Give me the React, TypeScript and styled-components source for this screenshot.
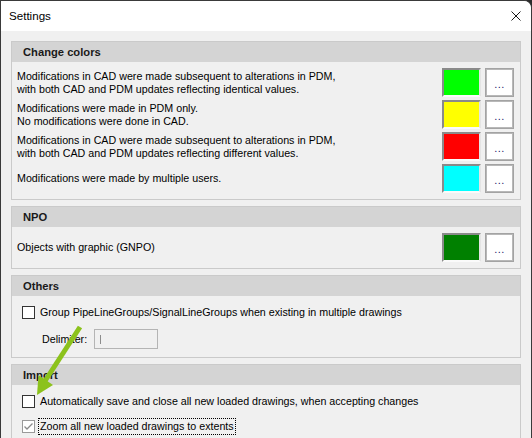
import React from "react";
import styled, { createGlobalStyle } from "styled-components";

const Global = createGlobalStyle`
  html, body { margin: 0; padding: 0; background: #2b2b2b; }
  body {
    width: 532px;
    height: 438px;
    overflow: hidden;
    font-family: "Liberation Sans", Arial, sans-serif;
    font-size: 10.7px;
    color: #000;
  }
  * { box-sizing: border-box; }
`;

const Window = styled.div`
  position: relative;
  width: 532px;
  height: 438px;
  background: #f0f0f0;
  border: 1px solid #3a3a3a;
  border-bottom: none;
  border-top-right-radius: 8px;
  overflow: hidden;
  display: flex;
  flex-direction: column;
`;

const TitleBar = styled.div`
  height: 30px;
  flex: none;
  background: #fff;
  display: flex;
  align-items: center;
  justify-content: space-between;
  padding: 0 10px 0 8px;
`;

const Title = styled.span`
  font-size: 11.6px;
  color: #000;
  line-height: 16px;
  padding-bottom: 1px;
`;

const Body = styled.div`
  flex: 1;
  display: flex;
  flex-direction: column;
  gap: 6px;
  padding: 10px 10px 0 10px;
`;

const Group = styled.section`
  border: 1px solid #cacaca;
  background: #f0f0f0;
  flex: none;
`;

const GroupHeader = styled.div`
  height: 20px;
  background: #d4d4d4;
  padding-left: 11px;
  font-weight: 700;
  font-size: 11.2px;
  line-height: 21px;
  color: #1a1a1a;
`;

const GroupContent = styled.div<{ $pt: number; $pb: number; $gap: number }>`
  display: flex;
  flex-direction: column;
  gap: ${(p) => p.$gap}px;
  padding: ${(p) => p.$pt}px 6px ${(p) => p.$pb}px 5px;
`;

const ColorRow = styled.div`
  height: 29px;
  display: flex;
  align-items: center;
`;

const RowText = styled.div`
  flex: 1;
  line-height: 13px;
  white-space: nowrap;
`;

const Swatch = styled.div<{ $color: string }>`
  width: 39px;
  height: 29px;
  background: ${(p) => p.$color};
  border-top: 2px solid #8a8a8a;
  border-left: 2px solid #8a8a8a;
  border-right: 2px solid #e4e4e4;
  border-bottom: 2px solid #fafafa;
  margin-right: 4px;
`;

const DotsButton = styled.div`
  width: 29px;
  height: 29px;
  background: #fff;
  border: 1px solid #a3a3a3;
  box-shadow: inset 0 0 0 1px #b8b8b8;
  display: flex;
  align-items: center;
  justify-content: center;
  font-size: 11px;
  color: #1a1a6a;
  letter-spacing: 0.5px;
  padding-top: 3px;
`;

const CheckRow = styled.div`
  height: 17px;
  display: flex;
  align-items: center;
  padding-left: 5px;
`;

const Box = styled.div<{ $checked?: boolean }>`
  width: 13px;
  height: 13px;
  flex: none;
  background: #fff;
  border: 1px solid ${(p) => (p.$checked ? "#9a9a9a" : "#333")};
  display: flex;
  align-items: center;
  justify-content: center;
`;

const CheckLabel = styled.span<{ $focus?: boolean }>`
  margin-left: 3px;
  padding: 0 1px;
  line-height: 15px;
  white-space: nowrap;
  border: 1px ${(p) => (p.$focus ? "dotted #000" : "solid transparent")};
`;

const FieldRow = styled.div`
  height: 20px;
  display: flex;
  align-items: center;
  padding-left: 25px;
`;

const FieldLabel = styled.span`
  width: 52px;
  flex: none;
  white-space: nowrap;
`;

const TextField = styled.div`
  width: 64px;
  height: 20px;
  border: 1px solid #b4b4b4;
  background: #f0f0f0;
  display: flex;
  align-items: center;
  padding-left: 5px;
`;

const Caret = styled.span`
  width: 1px;
  height: 9px;
  background: #8c8c8c;
`;

const Arrow = styled.svg`
  position: absolute;
  left: -1px;
  top: -1px;
  pointer-events: none;
`;

const rows = [
  {
    text: ["Modifications in CAD were made subsequent to alterations in PDM,", "with both CAD and PDM updates reflecting identical values."],
    color: "#00ff00",
  },
  { text: ["Modifications were made in PDM only.", "No modifications were done in CAD."], color: "#ffff00" },
  {
    text: ["Modifications in CAD were made subsequent to alterations in PDM,", "with both CAD and PDM updates reflecting different values."],
    color: "#ff0000",
  },
  { text: ["Modifications were made by multiple users."], color: "#00ffff" },
];

function ColorLine({ text, color }: { text: string[]; color: string }) {
  return (
    <ColorRow>
      <RowText>
        {text.map((t, i) => (
          <div key={i}>{t}</div>
        ))}
      </RowText>
      <Swatch $color={color} />
      <DotsButton>...</DotsButton>
    </ColorRow>
  );
}

function Check({ checked, focus, children }: { checked?: boolean; focus?: boolean; children: React.ReactNode }) {
  return (
    <CheckRow>
      <Box $checked={checked}>
        {checked && (
          <svg width="11" height="11" viewBox="0 0 11 11">
            <polyline points="1.5,5.5 4,8 9.5,2.5" fill="none" stroke="#8a8a8a" strokeWidth="1.3" />
          </svg>
        )}
      </Box>
      <CheckLabel $focus={focus}>{children}</CheckLabel>
    </CheckRow>
  );
}

export default function App() {
  return (
    <>
      <Global />
      <Window>
        <TitleBar>
          <Title>Settings</Title>
          <svg width="10" height="10" viewBox="0 0 10 10">
            <path d="M0.5 0.5 L9.5 9.5 M9.5 0.5 L0.5 9.5" stroke="#1a1a1a" strokeWidth="1" />
          </svg>
        </TitleBar>
        <Body>
          <Group>
            <GroupHeader>Change colors</GroupHeader>
            <GroupContent $pt={6} $pb={6} $gap={3}>
              {rows.map((r, i) => (
                <ColorLine key={i} text={r.text} color={r.color} />
              ))}
            </GroupContent>
          </Group>
          <Group>
            <GroupHeader>NPO</GroupHeader>
            <GroupContent $pt={6} $pb={6} $gap={0}>
              <ColorLine text={["Objects with graphic (GNPO)"]} color="#008000" />
            </GroupContent>
          </Group>
          <Group>
            <GroupHeader>Others</GroupHeader>
            <GroupContent $pt={8} $pb={8} $gap={8}>
              <Check>Group PipeLineGroups/SignalLineGroups when existing in multiple drawings</Check>
              <FieldRow>
                <FieldLabel>Delimiter:</FieldLabel>
                <TextField>
                  <Caret />
                </TextField>
              </FieldRow>
            </GroupContent>
          </Group>
          <Group>
            <GroupHeader>Import</GroupHeader>
            <GroupContent $pt={8} $pb={8} $gap={8}>
              <Check>Automatically save and close all new loaded drawings, when accepting changes</Check>
              <Check checked focus>
                Zoom all new loaded drawings to extents
              </Check>
            </GroupContent>
          </Group>
        </Body>
        <Arrow width="532" height="438" viewBox="0 0 532 438">
          <line x1="80" y1="327" x2="45" y2="381" stroke="#8cc21c" strokeWidth="5" strokeLinecap="butt" />
          <polygon points="37,395 38.5,375 53,385" fill="#8cc21c" />
        </Arrow>
      </Window>
    </>
  );
}
